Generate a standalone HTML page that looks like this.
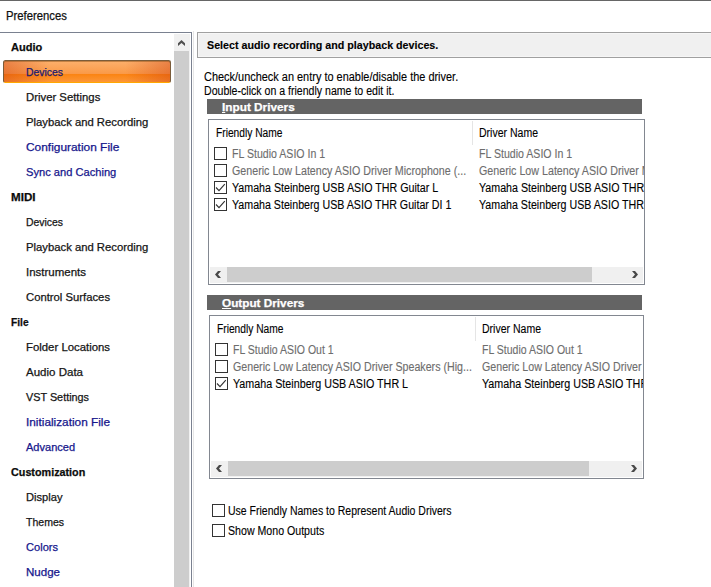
<!DOCTYPE html>
<html>
<head>
<meta charset="utf-8">
<title>Preferences</title>
<style>
html,body{margin:0;padding:0;}
body{width:711px;height:587px;overflow:hidden;background:#fff;position:relative;font-family:"Liberation Sans",sans-serif;color:#000;}
.abs{position:absolute;}
.t{position:absolute;white-space:pre;line-height:14px;height:14px;transform-origin:0 0;}
.cb{position:absolute;width:11px;height:11px;border:1px solid #333;background:#fff;}
.cb svg{position:absolute;left:0;top:0;}
.bar{position:absolute;background:#646464;height:15px;}
.lb{position:absolute;border:1px solid #828790;background:#fff;overflow:hidden;box-sizing:border-box;}
.sb{position:absolute;background:#f0f0f0;height:16px;}
.sb .thumb{position:absolute;top:0;height:15px;background:#cdcdcd;}
</style>
</head>
<body>
<!-- top window edge -->
<div class="abs" style="left:0;top:0;width:711px;height:1px;background:#666;"></div>
<!-- sidebar frame -->
<div class="abs" style="left:0;top:32px;width:192px;height:1px;background:#7a8190;"></div>
<div class="abs" style="left:191px;top:32px;width:1px;height:555px;background:#7a8190;"></div>
<div class="abs" style="left:193px;top:31px;width:1px;height:556px;background:#e6e6e6;"></div>
<!-- sidebar scrollbar -->
<div class="abs" style="left:174px;top:34px;width:16px;height:553px;background:#f0f0f0;"></div>
<div class="abs" style="left:174px;top:51px;width:15px;height:536px;background:#cdcdcd;"></div>
<svg class="abs" style="left:178px;top:40px;" width="7" height="6" viewBox="0 0 7 6"><polygon points="0,3.2 3.5,0 7,3.2 7,6 3.5,2.9 0,6" fill="#505050"/></svg>
<!-- selected item -->
<div class="abs" style="left:3px;top:60px;width:168px;height:23px;border-radius:2.5px;box-sizing:border-box;border:1px solid #7a5c3a;border-bottom-color:#ffa800;
background:
linear-gradient(to right, rgba(200,50,10,0.36) 0%, rgba(200,50,10,0.0) 27%, rgba(200,50,10,0.0) 73%, rgba(200,50,10,0.36) 100%),
linear-gradient(to bottom, #fcb06c 0%, #fa9a48 60%, #fb8412 63%, #fc9638 100%);box-shadow:inset 0 1px 0 rgba(140,85,30,0.5);"></div>
<!-- right header -->
<div class="abs" style="left:197px;top:32px;width:520px;height:26px;box-sizing:border-box;border:1px solid #a0a0a0;background:#f0f0f0;box-shadow:inset 0 0 0 1px #f6f6f6;"></div>
<!-- section bars -->
<div class="bar" style="left:207px;top:99px;width:435px;"></div>
<div class="bar" style="left:207px;top:295px;width:435px;"></div>

<div class="t" style="left:5.69px;top:8.59px;font-size:12px;color:#111;transform:scaleX(0.9397);-webkit-text-stroke:0.25px #111;">Preferences</div>
<div class="t" style="left:10.88px;top:40.03px;font-size:10.75px;color:#0c0c0c;transform:scaleX(1.0278);font-weight:bold;-webkit-text-stroke:0.25px #0c0c0c;">Audio</div>
<div class="t" style="left:25.92px;top:65.03px;font-size:10.75px;color:#1b1b70;transform:scaleX(0.9690);-webkit-text-stroke:0.25px #1b1b70;">Devices</div>
<div class="t" style="left:25.87px;top:90.03px;font-size:10.75px;color:#161616;transform:scaleX(1.0539);-webkit-text-stroke:0.25px #161616;">Driver Settings</div>
<div class="t" style="left:25.87px;top:115.03px;font-size:10.75px;color:#161616;transform:scaleX(1.0495);-webkit-text-stroke:0.25px #161616;">Playback and Recording</div>
<div class="t" style="left:25.84px;top:140.03px;font-size:10.75px;color:#16168c;transform:scaleX(1.1072);-webkit-text-stroke:0.25px #16168c;">Configuration File</div>
<div class="t" style="left:25.88px;top:165.03px;font-size:10.75px;color:#16168c;transform:scaleX(1.0350);-webkit-text-stroke:0.25px #16168c;">Sync and Caching</div>
<div class="t" style="left:10.85px;top:190.03px;font-size:10.75px;color:#0c0c0c;transform:scaleX(1.0813);font-weight:bold;-webkit-text-stroke:0.25px #0c0c0c;">MIDI</div>
<div class="t" style="left:25.92px;top:215.03px;font-size:10.75px;color:#161616;transform:scaleX(0.9690);-webkit-text-stroke:0.25px #161616;">Devices</div>
<div class="t" style="left:25.87px;top:240.03px;font-size:10.75px;color:#161616;transform:scaleX(1.0495);-webkit-text-stroke:0.25px #161616;">Playback and Recording</div>
<div class="t" style="left:25.86px;top:265.03px;font-size:10.75px;color:#161616;transform:scaleX(1.0690);-webkit-text-stroke:0.25px #161616;">Instruments</div>
<div class="t" style="left:25.87px;top:290.03px;font-size:10.75px;color:#161616;transform:scaleX(1.0496);-webkit-text-stroke:0.25px #161616;">Control Surfaces</div>
<div class="t" style="left:10.93px;top:315.03px;font-size:10.75px;color:#0c0c0c;transform:scaleX(0.9470);font-weight:bold;-webkit-text-stroke:0.25px #0c0c0c;">File</div>
<div class="t" style="left:25.87px;top:340.03px;font-size:10.75px;color:#161616;transform:scaleX(1.0574);-webkit-text-stroke:0.25px #161616;">Folder Locations</div>
<div class="t" style="left:25.86px;top:365.03px;font-size:10.75px;color:#161616;transform:scaleX(1.0723);-webkit-text-stroke:0.25px #161616;">Audio Data</div>
<div class="t" style="left:25.90px;top:390.03px;font-size:10.75px;color:#161616;transform:scaleX(1.0080);-webkit-text-stroke:0.25px #161616;">VST Settings</div>
<div class="t" style="left:25.84px;top:415.03px;font-size:10.75px;color:#16168c;transform:scaleX(1.0989);-webkit-text-stroke:0.25px #16168c;">Initialization File</div>
<div class="t" style="left:25.88px;top:440.03px;font-size:10.75px;color:#16168c;transform:scaleX(1.0255);-webkit-text-stroke:0.25px #16168c;">Advanced</div>
<div class="t" style="left:10.90px;top:465.03px;font-size:10.75px;color:#0c0c0c;transform:scaleX(1.0032);font-weight:bold;-webkit-text-stroke:0.25px #0c0c0c;">Customization</div>
<div class="t" style="left:25.88px;top:490.03px;font-size:10.75px;color:#161616;transform:scaleX(1.0369);-webkit-text-stroke:0.25px #161616;">Display</div>
<div class="t" style="left:25.91px;top:515.03px;font-size:10.75px;color:#161616;transform:scaleX(0.9796);-webkit-text-stroke:0.25px #161616;">Themes</div>
<div class="t" style="left:25.88px;top:540.03px;font-size:10.75px;color:#16168c;transform:scaleX(1.0313);-webkit-text-stroke:0.25px #16168c;">Colors</div>
<div class="t" style="left:25.86px;top:565.03px;font-size:10.75px;color:#16168c;transform:scaleX(1.0746);-webkit-text-stroke:0.25px #16168c;">Nudge</div>
<div class="t" style="left:206.62px;top:37.69px;font-size:11px;color:#000;transform:scaleX(0.9726);font-weight:bold;-webkit-text-stroke:0.12px #000;">Select audio recording and playback devices.</div>
<div class="t" style="left:204.15px;top:69.59px;font-size:12px;color:#000;transform:scaleX(0.9116);-webkit-text-stroke:0.12px #000;">Check/uncheck an entry to enable/disable the driver.</div>
<div class="t" style="left:204.47px;top:83.59px;font-size:12px;color:#000;transform:scaleX(0.8810);-webkit-text-stroke:0.12px #000;">Double-click on a friendly name to edit it.</div>
<div class="t" style="left:221.66px;top:100.09px;font-size:11px;color:#fff;transform:scaleX(1.0713);font-weight:bold;-webkit-text-stroke:0.25px #fff;"><u>I</u>nput Drivers</div>
<div class="t" style="left:222.06px;top:296.09px;font-size:11px;color:#fff;transform:scaleX(1.0686);font-weight:bold;-webkit-text-stroke:0.25px #fff;"><u>O</u>utput Drivers</div>
<div class="t" style="left:227.97px;top:504.24px;font-size:12px;color:#000;transform:scaleX(0.8754);-webkit-text-stroke:0.12px #000;">Use Friendly Names to Represent Audio Drivers</div>
<div class="t" style="left:227.97px;top:524.24px;font-size:12px;color:#000;transform:scaleX(0.8847);-webkit-text-stroke:0.12px #000;">Show Mono Outputs</div>
<div class="lb" style="left:208px;top:119px;width:437px;height:166px;">
<div class="abs" style="left:263px;top:1px;width:1px;height:24px;background:#e5e5e5;"></div>
<div class="t" style="left:7.09px;top:5.64px;font-size:12px;color:#000;transform:scaleX(0.8522);-webkit-text-stroke:0.12px #000;">Friendly Name</div>
<div class="t" style="left:269.77px;top:5.64px;font-size:12px;color:#000;transform:scaleX(0.8761);-webkit-text-stroke:0.12px #000;">Driver Name</div>
<div class="cb" style="left:5px;top:27px;"></div>
<div class="t" style="left:22.87px;top:26.84px;font-size:12px;color:#6d6d6d;transform:scaleX(0.8819);-webkit-text-stroke:0.12px #6d6d6d;">FL Studio ASIO In 1</div>
<div class="t" style="left:269.77px;top:26.84px;font-size:12px;color:#6d6d6d;transform:scaleX(0.8819);-webkit-text-stroke:0.12px #6d6d6d;">FL Studio ASIO In 1</div>
<div class="cb" style="left:5px;top:44px;"></div>
<div class="t" style="left:22.87px;top:43.84px;font-size:12px;color:#6d6d6d;transform:scaleX(0.8910);-webkit-text-stroke:0.12px #6d6d6d;">Generic Low Latency ASIO Driver Microphone (...</div>
<div class="t" style="left:269.77px;top:43.84px;font-size:12px;color:#6d6d6d;transform:scaleX(0.8910);-webkit-text-stroke:0.12px #6d6d6d;">Generic Low Latency ASIO Driver Microphone (High Definition</div>
<div class="cb" style="left:5px;top:61px;"><svg width="11" height="11" viewBox="0 0 11 11"><path d="M1.0 5.5 L4 8.6 L9.8 2.2" fill="none" stroke="#333" stroke-width="1.15"/></svg></div>
<div class="t" style="left:22.87px;top:60.84px;font-size:12px;color:#000;transform:scaleX(0.8898);-webkit-text-stroke:0.12px #000;">Yamaha Steinberg USB ASIO THR Guitar L</div>
<div class="t" style="left:269.77px;top:60.84px;font-size:12px;color:#000;transform:scaleX(0.8898);-webkit-text-stroke:0.12px #000;">Yamaha Steinberg USB ASIO THR Guitar L</div>
<div class="cb" style="left:5px;top:78px;"><svg width="11" height="11" viewBox="0 0 11 11"><path d="M1.0 5.5 L4 8.6 L9.8 2.2" fill="none" stroke="#333" stroke-width="1.15"/></svg></div>
<div class="t" style="left:22.87px;top:77.84px;font-size:12px;color:#000;transform:scaleX(0.8883);-webkit-text-stroke:0.12px #000;">Yamaha Steinberg USB ASIO THR Guitar DI 1</div>
<div class="t" style="left:269.77px;top:77.84px;font-size:12px;color:#000;transform:scaleX(0.8883);-webkit-text-stroke:0.12px #000;">Yamaha Steinberg USB ASIO THR Guitar DI 1</div>
<div class="sb" style="left:1px;top:147px;width:433px;"><div class="thumb" style="left:17px;width:365px;"></div>
<svg class="abs" style="left:5px;top:4px" width="6" height="7" viewBox="0 0 6 7"><polygon points="3,0 6,0 3,3.5 6,7 3,7 0,3.5" fill="#484848"/></svg>
<svg class="abs" style="left:422px;top:4px" width="6" height="7" viewBox="0 0 6 7"><polygon points="3,0 0,0 3,3.5 0,7 3,7 6,3.5" fill="#484848"/></svg>
</div>
</div>
<div class="lb" style="left:209px;top:315px;width:435px;height:164px;">
<div class="abs" style="left:265px;top:1px;width:1px;height:24px;background:#e5e5e5;"></div>
<div class="t" style="left:7.24px;top:5.64px;font-size:12px;color:#000;transform:scaleX(0.8522);-webkit-text-stroke:0.12px #000;">Friendly Name</div>
<div class="t" style="left:271.77px;top:5.64px;font-size:12px;color:#000;transform:scaleX(0.8761);-webkit-text-stroke:0.12px #000;">Driver Name</div>
<div class="cb" style="left:5px;top:27px;"></div>
<div class="t" style="left:22.77px;top:26.84px;font-size:12px;color:#6d6d6d;transform:scaleX(0.8751);-webkit-text-stroke:0.12px #6d6d6d;">FL Studio ASIO Out 1</div>
<div class="t" style="left:271.77px;top:26.84px;font-size:12px;color:#6d6d6d;transform:scaleX(0.8751);-webkit-text-stroke:0.12px #6d6d6d;">FL Studio ASIO Out 1</div>
<div class="cb" style="left:5px;top:44px;"></div>
<div class="t" style="left:22.77px;top:43.84px;font-size:12px;color:#6d6d6d;transform:scaleX(0.8888);-webkit-text-stroke:0.12px #6d6d6d;">Generic Low Latency ASIO Driver Speakers (Hig...</div>
<div class="t" style="left:271.77px;top:43.84px;font-size:12px;color:#6d6d6d;transform:scaleX(0.8888);-webkit-text-stroke:0.12px #6d6d6d;">Generic Low Latency ASIO Driver Speakers (High Definition</div>
<div class="cb" style="left:5px;top:61px;"><svg width="11" height="11" viewBox="0 0 11 11"><path d="M1.0 5.5 L4 8.6 L9.8 2.2" fill="none" stroke="#333" stroke-width="1.15"/></svg></div>
<div class="t" style="left:22.76px;top:60.84px;font-size:12px;color:#000;transform:scaleX(0.8949);-webkit-text-stroke:0.12px #000;">Yamaha Steinberg USB ASIO THR L</div>
<div class="t" style="left:271.76px;top:60.84px;font-size:12px;color:#000;transform:scaleX(0.8949);-webkit-text-stroke:0.12px #000;">Yamaha Steinberg USB ASIO THR L</div>
<div class="sb" style="left:1px;top:145px;width:431px;"><div class="thumb" style="left:17px;width:361px;"></div>
<svg class="abs" style="left:5px;top:4px" width="6" height="7" viewBox="0 0 6 7"><polygon points="3,0 6,0 3,3.5 6,7 3,7 0,3.5" fill="#484848"/></svg>
<svg class="abs" style="left:420px;top:4px" width="6" height="7" viewBox="0 0 6 7"><polygon points="3,0 0,0 3,3.5 0,7 3,7 6,3.5" fill="#484848"/></svg>
</div>
</div>
<div class="cb" style="left:212px;top:504px;"></div>
<div class="cb" style="left:212px;top:524px;"></div>
</body>
</html>
